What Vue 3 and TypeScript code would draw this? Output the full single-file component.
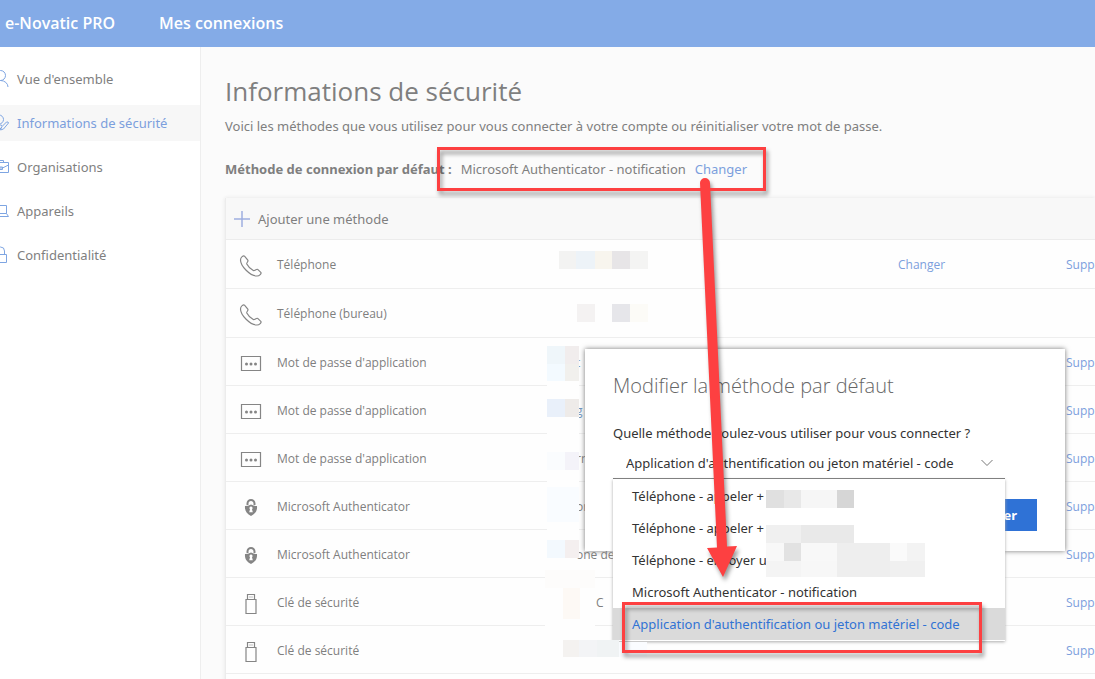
<script setup lang="ts">
import { ref } from 'vue'

type IconName = 'phone' | 'password' | 'authenticator' | 'key'
interface Method { icon: IconName; name: string; value: string; editable?: boolean; removable: boolean; tone?: string }
interface Block { x: number; y: number; w: number; h: number; fill: string }

const nav = [
  { id: 'overview', label: "Vue d'ensemble" },
  { id: 'security', label: 'Informations de sécurité' },
  { id: 'orgs', label: 'Organisations' },
  { id: 'devices', label: 'Appareils' },
  { id: 'privacy', label: 'Confidentialité' },
]

const methods: Method[] = [
  { icon: 'phone', name: 'Téléphone', value: '', editable: true, removable: true },
  { icon: 'phone', name: 'Téléphone (bureau)', value: '', removable: false },
  { icon: 'password', name: "Mot de passe d'application", value: 't', removable: true, tone: 'blue' },
  { icon: 'password', name: "Mot de passe d'application", value: 'g', removable: true, tone: 'blue' },
  { icon: 'password', name: "Mot de passe d'application", value: 'rn', removable: true },
  { icon: 'authenticator', name: 'Microsoft Authenticator', value: 'on', removable: true },
  { icon: 'authenticator', name: 'Microsoft Authenticator', value: 'one de', removable: true },
  { icon: 'key', name: 'Clé de sécurité', value: 'C', removable: true, tone: 'inset' },
  { icon: 'key', name: 'Clé de sécurité', value: '', removable: true },
]

const options = [
  'Téléphone - appeler +',
  'Téléphone - appeler +',
  'Téléphone - envoyer u',
  'Microsoft Authenticator - notification',
  "Application d'authentification ou jeton matériel - code",
]
const selected = ref(4)

const blocks: Block[] = [
  { x: 559, y: 251, w: 17, h: 18, fill: '#f3f3f2' },
  { x: 576, y: 251, w: 19, h: 18, fill: '#edf3f8' },
  { x: 595, y: 251, w: 17, h: 18, fill: '#f8f5ee' },
  { x: 612, y: 251, w: 18, h: 18, fill: '#e7e5e7' },
  { x: 630, y: 251, w: 18, h: 18, fill: '#f4f4f3' },
  { x: 577, y: 304, w: 18, h: 18, fill: '#f4f2f2' },
  { x: 612, y: 304, w: 18, h: 18, fill: '#e6e6ea' },
  { x: 630, y: 304, w: 18, h: 18, fill: '#fcfbf7' },
  { x: 547, y: 346, w: 18, h: 18, fill: '#eff6fa' },
  { x: 565, y: 346, w: 14, h: 18, fill: '#f1eded' },
  { x: 547, y: 364, w: 18, h: 17, fill: '#f3faff' },
  { x: 565, y: 364, w: 14, h: 17, fill: '#f1f0ed' },
  { x: 547, y: 381, w: 32, h: 18, fill: '#fefefe' },
  { x: 547, y: 399, w: 18, h: 18, fill: '#e9f0fa' },
  { x: 565, y: 399, w: 14, h: 18, fill: '#eeebe9' },
  { x: 547, y: 417, w: 32, h: 35, fill: '#fefefe' },
  { x: 547, y: 452, w: 18, h: 18, fill: '#fafcfe' },
  { x: 565, y: 452, w: 14, h: 18, fill: '#f4f3f9' },
  { x: 547, y: 470, w: 32, h: 17, fill: '#fefefe' },
  { x: 547, y: 487, w: 32, h: 35, fill: '#f9fcff' },
  { x: 547, y: 522, w: 32, h: 18, fill: '#fefefe' },
  { x: 547, y: 540, w: 18, h: 18, fill: '#f3f9fe' },
  { x: 565, y: 540, w: 14, h: 18, fill: '#f4efef' },
  { x: 545, y: 570, w: 50, h: 18, fill: '#fdfcfb' },
  { x: 563, y: 588, w: 17, h: 31, fill: '#fdf9f5' },
  { x: 545, y: 619, w: 50, h: 21, fill: '#fefefe' },
  { x: 563, y: 640, w: 16, h: 17, fill: '#f4f2f0' },
  { x: 579, y: 640, w: 18, h: 17, fill: '#f3f4f6' },
  { x: 597, y: 640, w: 22, h: 17, fill: '#f0f3f4' },
  { x: 619, y: 642, w: 28, h: 15, fill: '#fafcff' },
  { x: 766, y: 490, w: 18, h: 18, fill: '#e0e0e0' },
  { x: 784, y: 490, w: 17, h: 18, fill: '#e8e8e8' },
  { x: 801, y: 490, w: 36, h: 18, fill: '#f6f6f6' },
  { x: 837, y: 490, w: 17, h: 18, fill: '#d6d6d6' },
  { x: 766, y: 525, w: 35, h: 18, fill: '#f0f0f0' },
  { x: 801, y: 525, w: 53, h: 18, fill: '#e9e9e9' },
  { x: 766, y: 543, w: 18, h: 18, fill: '#f8f8f8' },
  { x: 784, y: 543, w: 17, h: 18, fill: '#e2e2e2' },
  { x: 801, y: 543, w: 36, h: 18, fill: '#f8f8f8' },
  { x: 837, y: 543, w: 53, h: 18, fill: '#eeeeee' },
  { x: 890, y: 543, w: 17, h: 18, fill: '#fafafa' },
  { x: 907, y: 543, w: 18, h: 18, fill: '#f3f3f3' },
  { x: 766, y: 561, w: 35, h: 16, fill: '#f4f4f4' },
  { x: 801, y: 561, w: 36, h: 16, fill: '#f7f7f7' },
  { x: 837, y: 561, w: 53, h: 16, fill: '#eeeeee' },
  { x: 890, y: 561, w: 35, h: 16, fill: '#f0f0f0' },
]
</script>

<template>
  <div class="page">
    <header class="topbar">
      <a href="#" class="brand">e-Novatic PRO</a>
      <span class="product">Mes connexions</span>
    </header>

    <div class="body">
      <nav class="sidebar">
        <a v-for="item in nav" :key="item.id" href="#" class="nav-item" :class="{ active: item.id === 'security' }">
          <svg class="nav-icon" viewBox="0 0 18 18" aria-hidden="true">
            <template v-if="item.id === 'overview'">
              <circle cx="9.500" cy="5.500" r="5" />
              <path d="M2 17a7.500 6.500 0 0 1 15 0" />
            </template>
            <template v-else-if="item.id === 'security'">
              <circle cx="8" cy="5.500" r="4.500" />
              <path d="M1 17a7 6 0 0 1 10-5.500M9.500 16l1-3 5-5q2-.5 2 1l-5 6zM6 14l2 2 3-3" />
            </template>
            <template v-else-if="item.id === 'orgs'">
              <path d="M1.500 4.500h16v10h-16zM6.500 4.500v-2h6v2M1.500 7l6 3h4l6-3M7.500 9h4v2.500h-4z" />
            </template>
            <template v-else-if="item.id === 'devices'">
              <path d="M3.500 3.500h12v8h-12zM3.500 11.500l-2 3h16l-2-3" />
            </template>
            <template v-else>
              <path d="M3.500 8.500h12v8h-12zM5.500 8.500V5a4 4 0 0 1 8 0v3.500" />
            </template>
          </svg>
          <span>{{ item.label }}</span>
        </a>
      </nav>

      <main class="content">
        <h1>Informations de sécurité</h1>
        <p class="intro">Voici les méthodes que vous utilisez pour vous connecter à votre compte ou réinitialiser votre mot de passe.</p>
        <p class="default-method">
          <strong>Méthode de connexion par défaut :</strong>
          <span>Microsoft Authenticator - notification</span>
          <a href="#">Changer</a>
        </p>

        <section class="card">
          <button type="button" class="add">
            <svg viewBox="0 0 16 16" aria-hidden="true"><path d="M8 0v16M0 8h16" /></svg>
            <span>Ajouter une méthode</span>
          </button>
          <table class="methods">
            <colgroup>
              <col class="c-icon" /><col class="c-name" /><col /><col class="c-change" /><col class="c-delete" />
            </colgroup>
            <tbody>
              <tr v-for="(m, i) in methods" :key="i" :class="{ tall: m.icon === 'phone' }">
                <td class="icon-cell">
                  <svg class="method-icon" viewBox="0 0 24 24" aria-hidden="true">
                    <path v-if="m.icon === 'phone'" d="M5.500 2.200C4.500 1.200 1.500 3 1.500 6C1.500 12 11 22 18 22C20.500 22 22.800 19.500 21.800 18.300L18.700 15.400C17.500 14.500 15.500 17.300 14.300 16.600C12 15.300 9 12.300 7.800 10C7.200 8.700 9.800 7.600 8.800 6.200Z" />
                    <template v-else-if="m.icon === 'password'">
                      <path d="M2.500 4.500h19v14h-19z" />
                      <g class="solid"><circle cx="7.500" cy="12" r="1.500" /><circle cx="12" cy="12" r="1.500" /><circle cx="16.500" cy="12" r="1.500" /></g>
                    </template>
                    <template v-else-if="m.icon === 'authenticator'">
                      <path class="heavy" d="M8.500 9V7.500a3.500 3.500 0 0 1 7 0V9" />
                      <path class="solid" d="M6 10q3 0 6-1.500q3 1.500 6 1.500c.5 5-2 8-6 10c-4-2-6.500-5-6-10z" />
                      <path class="hole" d="M12 10.500a1.600 1.600 0 0 1 1 2.800l.8 3h-3.600l.8-3a1.600 1.600 0 0 1 1-2.800z" />
                    </template>
                    <template v-else>
                      <path d="M7 7.500h10v14H7zM8.500 7.500v-5h7v5M10.500 5h1M12.500 5h1" />
                    </template>
                  </svg>
                </td>
                <td>{{ m.name }}</td>
                <td :class="m.tone">{{ m.value }}</td>
                <td><a v-if="m.editable" href="#">Changer</a></td>
                <td><a v-if="m.removable" href="#">Supprimer</a></td>
              </tr>
            </tbody>
          </table>
        </section>
      </main>
    </div>

    <section class="dialog" role="dialog" aria-labelledby="dialog-title">
      <h2 id="dialog-title">Modifier la méthode par défaut</h2>
      <label for="method">Quelle méthode voulez-vous utiliser pour vous connecter ?</label>
      <div class="picker">
        <select id="method" v-model="selected">
          <option v-for="(o, i) in options" :key="i" :value="i">{{ o }}</option>
        </select>
        <svg class="chevron" viewBox="0 0 12 8" aria-hidden="true"><path d="M.5 1L6 6.500L11.500 1" /></svg>
        <ul class="choices" role="listbox" aria-label="Méthodes">
          <li v-for="(o, i) in options" :key="i" role="option" :aria-selected="selected === i" :class="{ chosen: selected === i }" @click="selected = i">{{ o }}</li>
        </ul>
      </div>
      <button type="button" class="confirm">Confirmer</button>
    </section>

    <svg class="overlay" width="1095" height="679" aria-hidden="true">
      <rect v-for="(b, i) in blocks" :key="i" :x="b.x" :y="b.y" :width="b.w" :height="b.h" :fill="b.fill" />
      <g class="marks">
        <rect x="438.500" y="148.500" width="326" height="41" />
        <rect x="623.500" y="603.500" width="357" height="48" />
        <path d="M700 183a5 5 0 0 1 10 0L727 546.500L737 546L723 577L707 548L717 547.500Z" />
      </g>
    </svg>
  </div>
</template>

<style>
body { margin: 0; }
</style>

<style scoped>
.page {
  position: relative;
  display: flex;
  flex-direction: column;
  height: 100vh;
  overflow: hidden;
  background: #fbfbfb;
  color: #7f7f7f;
  font: 13px/20px "Noto Sans", "Open Sans", sans-serif;
}
a { color: #7c9fdd; text-decoration: none; }
.topbar {
  display: flex;
  flex: none;
  align-items: center;
  gap: 44px;
  box-sizing: border-box;
  height: 47px;
  padding: 0 0 2px 5px;
  background: #84abe7;
  color: #fff;
  font-family: "Open Sans", "Noto Sans", sans-serif;
  font-size: 16px;
  font-weight: 600;
}
.brand { color: #fff; }
.body { display: flex; flex: 1; min-height: 0; }
.sidebar {
  display: flex;
  flex: none;
  flex-direction: column;
  gap: 8px;
  box-sizing: border-box;
  width: 201px;
  padding-top: 14px;
  border-right: 1px solid #eee;
  background: #fff;
}
.nav-item { display: flex; align-items: center; gap: 8px; height: 36px; color: #7f7f7f; }
.nav-item.active { background: #f7f7f7; color: #7c9fdd; }
.nav-icon { flex: none; width: 18px; height: 18px; margin-left: -9px; fill: none; stroke: #7ea5e2; }
.content { flex: 1; min-width: 0; padding: 26px 0 0 24px; overflow: hidden; }
h1 { margin: 0; font-family: "Open Sans", "Noto Sans", sans-serif; font-size: 26px; font-weight: 400; line-height: 36px; }
p { margin: 0; }
.intro { margin-top: 7px; }
.default-method { display: flex; gap: 9px; margin-top: 23px; }
.card { margin-top: 19px; padding-bottom: 48px; border-left: 1px solid #ececec; background: #fefefe; box-shadow: 0 0 4px #e4e4e4; }
.add {
  display: flex;
  align-items: center;
  gap: 8px;
  width: 100%;
  height: 42px;
  padding: 0 8px;
  border: 0;
  border-bottom: 1px solid #ececec;
  background: #f8f8f8;
  color: #7f7f7f;
  font: inherit;
}
.add svg { width: 16px; height: 16px; stroke: #9eafe0; stroke-width: 1.5; }
.methods {
  width: calc(100% + 91px);
  table-layout: fixed;
  border-collapse: separate;
  border-spacing: 0;
  font-family: "Open Sans", "Noto Sans", sans-serif;
  font-size: 12px;
}
.c-icon { width: 51px; }
.c-name { width: 299px; }
.c-change { width: 168px; }
.c-delete { width: 120px; }
tr { height: 48px; }
tr.tall { height: 49px; }
td { padding: 2px 0 0; border-bottom: 1px solid #eee; }
td.blue { color: #6f94bd; }
td.inset { padding-left: 20px; }
.icon-cell { padding: 4px 0 0 13px; }
.method-icon { display: block; width: 24px; height: 24px; fill: none; stroke: #858585; stroke-width: 1.2; }
.method-icon .solid { fill: #858585; stroke: none; }
.method-icon .heavy { stroke-width: 2; }
.method-icon .hole { fill: #fff; stroke: none; }
.dialog {
  position: absolute;
  top: 349px;
  left: 585px;
  display: flex;
  flex-direction: column;
  box-sizing: border-box;
  width: 480px;
  padding: 23px 28px 20px;
  background: #fff;
  box-shadow: 0 0 5px #777;
  color: #333;
}
h2 { margin: 0; color: #666; font-family: "Open Sans", "Noto Sans", sans-serif; font-size: 20px; font-weight: 300; line-height: 28px; }
label { margin-top: 23px; }
.picker { position: relative; width: 392px; margin-top: 6px; }
select {
  display: block;
  width: 100%;
  height: 30px;
  padding: 0 32px 2px 13px;
  border: 0;
  border-bottom: 1px solid #777;
  outline: 0;
  appearance: none;
  background: transparent;
  color: #333;
  font: inherit;
}
.chevron { position: absolute; top: 10px; right: 12px; width: 12px; height: 8px; fill: none; stroke: #777; }
.choices {
  position: absolute;
  top: 30px;
  left: 0;
  box-sizing: border-box;
  width: 100%;
  margin: 0;
  padding: 1px 0;
  background: #fff;
  box-shadow: 0 1px 3px #aaa;
  list-style: none;
}
.choices li { padding: 0 19px; line-height: 32px; white-space: nowrap; }
.choices .chosen { background: #dadada; color: #3173d4; }
.confirm {
  align-self: flex-end;
  height: 32px;
  margin-top: 20px;
  padding: 0 20px;
  border: 0;
  background: #2f72d6;
  color: #fff;
  font: inherit;
  font-weight: 700;
}
.overlay { position: absolute; top: 0; left: 0; pointer-events: none; }
.marks { fill: none; stroke: none; filter: drop-shadow(2px 4px 2px rgba(0, 0, 0, 0.4)); }
.marks rect { stroke: #fd4041; stroke-width: 3; }
.marks path { fill: #fd4041; }
</style>
